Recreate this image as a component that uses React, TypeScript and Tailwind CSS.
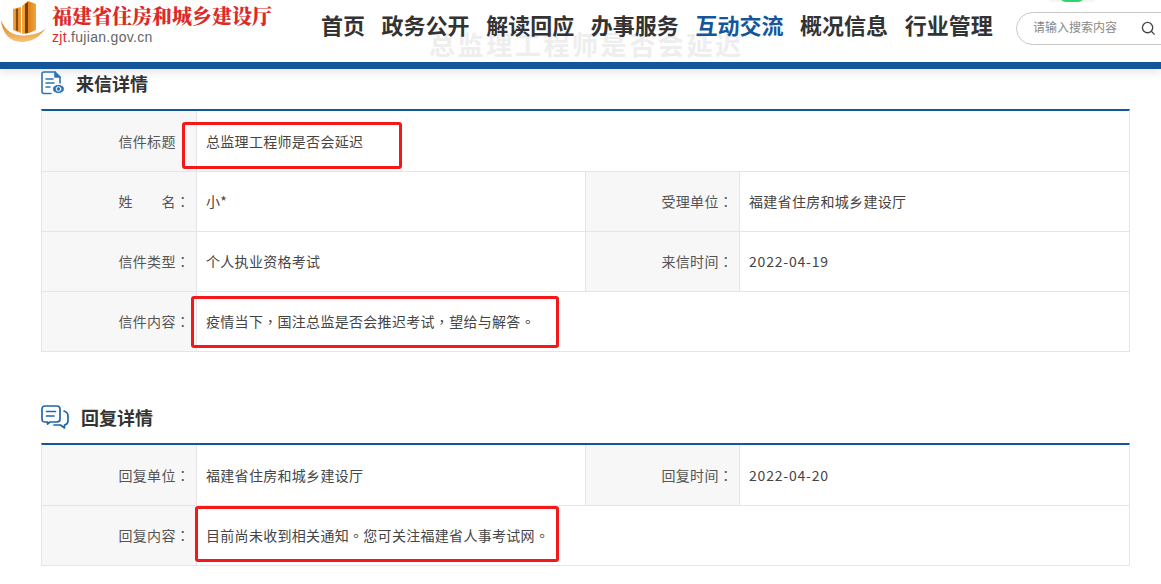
import React from 'react'

const font = { fontFamily: '"Noto Sans CJK SC", "Liberation Sans", sans-serif' }

const navItems = ['首页', '政务公开', '解读回应', '办事服务', '互动交流', '概况信息', '行业管理']

function Logo() {
  return (
    <div className="flex w-[321px] shrink-0 items-start">
      <svg width="48" height="44" viewBox="0 0 48 44" className="shrink-0">
        <defs>
          <linearGradient id="bar" x1="0" y1="0" x2="1" y2="0">
            <stop offset="0" stopColor="#f4a93e" />
            <stop offset="0.5" stopColor="#e08418" />
            <stop offset="1" stopColor="#f0a540" />
          </linearGradient>
          <linearGradient id="arc" x1="0" y1="0" x2="0" y2="1">
            <stop offset="0" stopColor="#dd7d10" />
            <stop offset="1" stopColor="#f5c47a" />
          </linearGradient>
        </defs>
        <path d="M13 9 L21 7 L21 33 L13 30 Z" fill="url(#bar)" />
        <path d="M16 9 L18 8.5 L18 31 L16 30.5 Z" fill="#8a4a10" />
        <path d="M22 6 L28 1 L36 4 L36 30 L29 33 L22 34 Z" fill="url(#bar)" />
        <path d="M25 4 L28 2 L28 33 L25 33.5 Z" fill="#7a3d0c" />
        <path d="M1 20 C5 31 14 36 24 35.5 C33 35 41 33 46 28 C40 37 31 42 22 42 C10 42 2 33 1 20 Z" fill="url(#arc)" />
      </svg>
      <div className="ml-[4px] flex flex-col">
        <span className="mt-[3px] whitespace-nowrap text-[20px] leading-[26px] font-black text-[#dc2a2a]" style={{ fontFamily: '"Noto Serif CJK SC", "Noto Sans CJK SC", serif' }}>
          福建省住房和城乡建设厅
        </span>
        <span className="mt-[1px] whitespace-nowrap text-[14px] leading-[15px] tracking-[0.3px] text-[#666]" style={{ fontFamily: '"Liberation Sans", sans-serif' }}>
          <span className="text-[#dc2a2a]">zjt</span>.fujian.gov.cn
        </span>
      </div>
    </div>
  )
}

function Header() {
  return (
    <div className="relative h-[62px] overflow-hidden bg-white">
      <div className="absolute left-[429px] top-[29px] text-[26px] leading-[30px] font-bold tracking-[2.6px] whitespace-nowrap text-[#eeeeee]">
        总监理工程师是否会延迟
      </div>
      <div className="absolute left-[1046px] top-[-12px] h-[14px] w-[52px] rounded-full bg-[#f5f5f5]">
        <div className="mx-auto mt-[2px] h-[12px] w-[24px] rounded-full bg-[#2fd46a]" />
      </div>
      <div className="relative flex h-full items-start">
        <Logo />
        <div className="mt-[9px] flex gap-[16.6px]">
          {navItems.map(item => (
            <span
              key={item}
              className={`text-[22px] leading-[30px] font-bold whitespace-nowrap ${item === '互动交流' ? 'text-[#15569b]' : 'text-[#333333]'}`}
            >
              {item}
            </span>
          ))}
        </div>
        <div className="ml-[23.4px] mt-[12px] flex h-[33px] w-[170px] shrink-0 items-center rounded-full border border-[#c8c8c8] pl-[16px]">
          <span className="-mt-[3px] text-[12px] whitespace-nowrap text-[#888888]">请输入搜索内容</span>
          <svg width="15" height="15" viewBox="0 0 16 16" fill="none" stroke="#444" strokeWidth="1.4" className="ml-[24px] -mt-px">
            <circle cx="7" cy="7" r="5.5" />
            <path d="M11 11 L14.5 14.5" />
          </svg>
        </div>
      </div>
    </div>
  )
}

function P({ children }: { children: string }) {
  // centred full-width punctuation, as in the original page font
  return <span className="font-['Noto_Sans_CJK_TC']">{children}</span>
}

function Label({ text, colon = true, second }: { text: string; colon?: boolean; second?: boolean }) {
  return (
    <div className={`flex shrink-0 items-center justify-end border-r border-[#e5e5e5] bg-[#f7f7f7] pr-[6px] text-[#555555] ${second ? 'w-[154px]' : 'w-[155px]'}`}>
      {text}
      <span className={colon ? '' : 'invisible'}>
        <P>：</P>
      </span>
    </div>
  )
}

function Value({ children, wide }: { children: React.ReactNode; wide?: boolean }) {
  return <div className={`flex items-center pl-[9px] text-[#444444] ${wide ? 'flex-1' : 'w-[389px] shrink-0 border-r border-[#e5e5e5]'}`}>{children}</div>
}

function Row({ children, box, first }: { children: React.ReactNode; box?: string; first?: boolean }) {
  return (
    <div className={`relative flex border-b border-[#e5e5e5] text-[14px] tracking-[0.3px] ${first ? 'h-[61px]' : 'h-[60px]'}`}>
      {children}
      {box && <div className={`absolute rounded-[3px] border-[3px] border-[#f5181b] ${box}`} />}
    </div>
  )
}

function SectionTitle({ icon, title, className }: { icon: React.ReactNode; title: string; className: string }) {
  return (
    <div className={`flex items-center ${className}`}>
      {icon}
      <span className="text-[18px] leading-[26px] font-bold text-[#333333]">{title}</span>
    </div>
  )
}

function LetterIcon() {
  return (
    <svg width="24" height="24" viewBox="0 0 24 24" fill="none" stroke="#2f74b5" strokeWidth="1.6" strokeLinecap="round" strokeLinejoin="round">
      <path d="M10 22.5 H3 C1.8 22.5 1 21.7 1 20.5 V3 C1 1.8 1.8 1 3 1 H14 L19 6 V12" />
      <path d="M14 1 V6 H19" fill="#2f74b5" />
      <path d="M5 8 H12 M5 12 H13 M5 16 H9" />
      <ellipse cx="17.5" cy="18" rx="6" ry="4.6" fill="#2f74b5" stroke="#fff" strokeWidth="1" />
      <circle cx="17.5" cy="18" r="2.3" fill="#2f74b5" stroke="#fff" strokeWidth="1" />
    </svg>
  )
}

function ReplyIcon() {
  return (
    <svg width="28" height="24" viewBox="0 0 28 24" fill="none" stroke="#1f66ab" strokeWidth="1.7" strokeLinecap="round" strokeLinejoin="round">
      <path d="M4 1 H16 C18 1 19 2 19 4 V14 C19 16 18 17 16 17 H9 L6.5 19 V17 H4 C2 17 1 16 1 14 V4 C1 2 2 1 4 1 Z" />
      <path d="M5.5 6.5 H14.5 M5.5 11 H13" />
      <path d="M23 6 C26 7 27 8.5 27 11 V16 C27 18.5 25.5 19.5 23.5 20 V23 L19.5 20 H13" />
    </svg>
  )
}

export default function App() {
  return (
    <div className="h-[584px] w-[1161px] overflow-hidden bg-white" style={font}>
      <Header />
      <div className="h-[7px] bg-[#15569b] shadow-[0_3px_8px_rgba(0,0,0,0.12)]" />

      <div className="w-[1130px] pl-[41px]">
        <SectionTitle icon={<LetterIcon />} title="来信详情" className="mb-[12px] h-[28px] gap-[11px]" />
        <div className="border-x border-t-2 border-x-[#e5e5e5] border-t-[#15569b]">
          <Row first box="left-[140px] top-[11px] h-[47px] w-[220px]">
            <Label text="信件标题" colon={false} />
            <Value wide>总监理工程师是否会延迟</Value>
          </Row>
          <Row>
            <Label text="姓　　名" />
            <Value>小*</Value>
            <Label text="受理单位" second />
            <Value wide>福建省住房和城乡建设厅</Value>
          </Row>
          <Row>
            <Label text="信件类型" />
            <Value>个人执业资格考试</Value>
            <Label text="来信时间" second />
            <Value wide>
              <span className="tracking-[0.8px]">2022-04-19</span>
            </Value>
          </Row>
          <Row box="left-[149px] top-[4px] h-[52px] w-[368px]">
            <Label text="信件内容" />
            <Value wide>
              <span>
                疫情当下<P>，</P>国注总监是否会推迟考试<P>，</P>望给与解答<P>。</P>
              </span>
            </Value>
          </Row>
        </div>

        <SectionTitle icon={<ReplyIcon />} title="回复详情" className="mt-[51px] mb-[13px] h-[27px] gap-[12px]" />
        <div className="border-x border-t-2 border-x-[#e5e5e5] border-t-[#15569b]">
          <Row first>
            <Label text="回复单位" />
            <Value>福建省住房和城乡建设厅</Value>
            <Label text="回复时间" second />
            <Value wide>
              <span className="tracking-[0.8px]">2022-04-20</span>
            </Value>
          </Row>
          <Row box="left-[153px] top-[0px] h-[56px] w-[364px]">
            <Label text="回复内容" />
            <Value wide>
              <span>
                目前尚未收到相关通知<P>。</P>您可关注福建省人事考试网<P>。</P>
              </span>
            </Value>
          </Row>
        </div>
      </div>
    </div>
  )
}
